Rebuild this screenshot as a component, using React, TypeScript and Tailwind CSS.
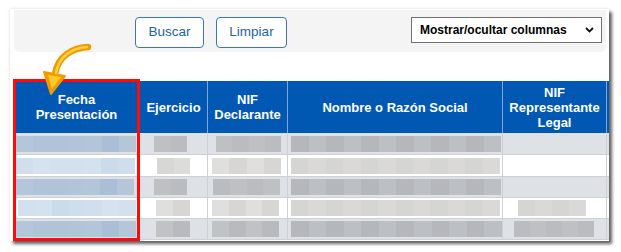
import React from 'react';

type Block = { left: number; width: number } | null;

const BLUE_DARK = ['#b3c5d8', '#b0c3d7', '#b4c6d9', '#aabfd5', '#b2c5d8', '#b1c3d7', '#b5c6d9'];
const BLUE_LIGHT = ['#d4e1ee', '#d3e0ed', '#d1dfec', '#cbdbeb', '#d3e0ee', '#d6e2ef', '#d0ddec'];
const GRAY_DARK = ['#bdc0c3', '#b8babd', '#bec0c2', '#b5b7ba', '#c0c2c4', '#babcbf'];
const GRAY_LIGHT = ['#dad9d7', '#d7d6d4', '#dcdcdb', '#d5d5d4', '#dfdfde', '#d7d8d6'];

const columns = [
  { width: 125, title: ['Fecha', 'Presentación'] },
  { width: 68, title: ['Ejercicio'] },
  { width: 80, title: ['NIF', 'Declarante'] },
  { width: 215, title: ['Nombre o Razón Social'] },
  { width: 104, title: ['NIF', 'Representante', 'Legal'] },
  { width: 40, title: [''] },
];

// blurred placeholders, one per cell: [left offset, width]
const rows: { height: number; blocks: Block[] }[] = [
  { height: 22, blocks: [{ left: 2, width: 120 }, { left: 14, width: 33 }, { left: 8, width: 65 }, { left: 3, width: 210 }, null, null] },
  { height: 22, blocks: [{ left: 2, width: 119 }, { left: 17, width: 33 }, { left: 4, width: 69 }, { left: 3, width: 209 }, null, null] },
  { height: 21, blocks: [{ left: 2, width: 118 }, { left: 14, width: 33 }, { left: 5, width: 67 }, { left: 3, width: 210 }, null, null] },
  { height: 21, blocks: [{ left: 4, width: 118 }, { left: 16, width: 34 }, { left: 4, width: 67 }, { left: 3, width: 209 }, { left: 15, width: 68 }, null] },
  { height: 21, blocks: [{ left: 2, width: 120 }, { left: 16, width: 34 }, { left: 4, width: 67 }, { left: 3, width: 212 }, { left: 11, width: 80 }, null] },
];

function Placeholder({ block, palette }: { block: Block; palette: string[] }) {
  if (!block) return null;
  const count = Math.max(2, Math.round(block.width / 17));
  return (
    <div className="flex h-[16px] blur-[0.5px]" style={{ marginLeft: block.left, width: block.width }}>
      {Array.from({ length: count }).map((_, i) => (
        <div key={i} className="flex-1" style={{ background: palette[(i * 3 + block.left) % palette.length] }} />
      ))}
    </div>
  );
}

export default function App() {
  return (
    <div className="relative w-[621px] h-[252px] bg-white pt-[9px] pl-[10px] font-['Liberation_Sans',Arial,sans-serif] overflow-hidden">
      <div className="w-[599px] h-[232px] bg-white overflow-hidden pl-[4px] pr-[3px] pt-[1px] shadow-[3px_3px_3px_rgba(0,0,0,0.6),0_0_3px_rgba(0,0,0,0.15)]">
        {/* Toolbar */}
        <div className="h-[42px] bg-[#f4f4f4] rounded-b-[6px] flex items-start pt-[7px]">
          <button className="ml-[121px] w-[69px] h-[31px] border border-[#3b76b9] rounded-[4px] bg-white text-[13.5px] text-[#2262a8]">
            Buscar
          </button>
          <button className="ml-[12px] w-[71px] h-[31px] border border-[#3b76b9] rounded-[4px] bg-white text-[13.5px] text-[#2262a8]">
            Limpiar
          </button>
          <div className="ml-[124px] w-[191px] h-[26px] border border-[#6f6f6f] bg-white flex items-center pl-[8px] pr-[7px]">
            <span className="text-[12px] font-bold text-black flex-1">Mostrar/ocultar columnas</span>
            <svg width="9" height="6" viewBox="0 0 9 6">
              <path d="M1 1 L4.5 4.5 L8 1" fill="none" stroke="#111" strokeWidth="1.8" />
            </svg>
          </div>
        </div>

        {/* Table */}
        <div className="mt-[29px] w-[632px]">
          <div className="flex h-[52px] bg-[#0058b2]">
            {columns.map((c, i) => (
              <div
                key={i}
                className={`flex flex-col items-center justify-center text-white font-bold text-[13px] leading-[15px] text-center shrink-0 ${i > 0 ? 'border-l border-[#7ea6d6]' : ''}`}
                style={{ width: c.width }}
              >
                {c.title.map((t, j) => (
                  <span key={j}>{t}</span>
                ))}
              </div>
            ))}
          </div>
          {rows.map((r, ri) => {
            const dark = ri % 2 === 0;
            return (
              <div
                key={ri}
                className={`flex border-b border-[#cdd1d5] ${dark ? 'bg-[#dee1e5]' : 'bg-white'}`}
                style={{ height: r.height }}
              >
                {columns.map((c, ci) => (
                  <div
                    key={ci}
                    className={`flex items-center shrink-0 ${ci > 0 ? 'border-l border-[#cdd1d5]' : ''}`}
                    style={{ width: c.width }}
                  >
                    <Placeholder
                      block={r.blocks[ci]}
                      palette={ci === 0 ? (dark ? BLUE_DARK : BLUE_LIGHT) : dark ? GRAY_DARK : GRAY_LIGHT}
                    />
                  </div>
                ))}
              </div>
            );
          })}
        </div>
      </div>

      {/* Highlight box */}
      <div className="absolute left-[13px] top-[79px] w-[127px] h-[162px] border-[3px] border-[#ff0a0a]" />

      {/* Arrow */}
      <svg className="absolute left-0 top-0" width="621" height="252" viewBox="0 0 621 252">
        <path d="M88 47 C72 48 58 56 55 74" fill="none" stroke="#f19a05" strokeWidth="6.5" strokeLinecap="round" />
        <polygon points="44,72 65,76 51,94" fill="#f19a05" stroke="#f19a05" strokeWidth="2" strokeLinejoin="round" />
        <path d="M87 47 C72 48 59 56 56 73" fill="none" stroke="#ffd13a" strokeWidth="2.5" strokeLinecap="round" />
        <polygon points="48,75 61,77 52,89" fill="#ffc928" />
      </svg>
    </div>
  );
}
